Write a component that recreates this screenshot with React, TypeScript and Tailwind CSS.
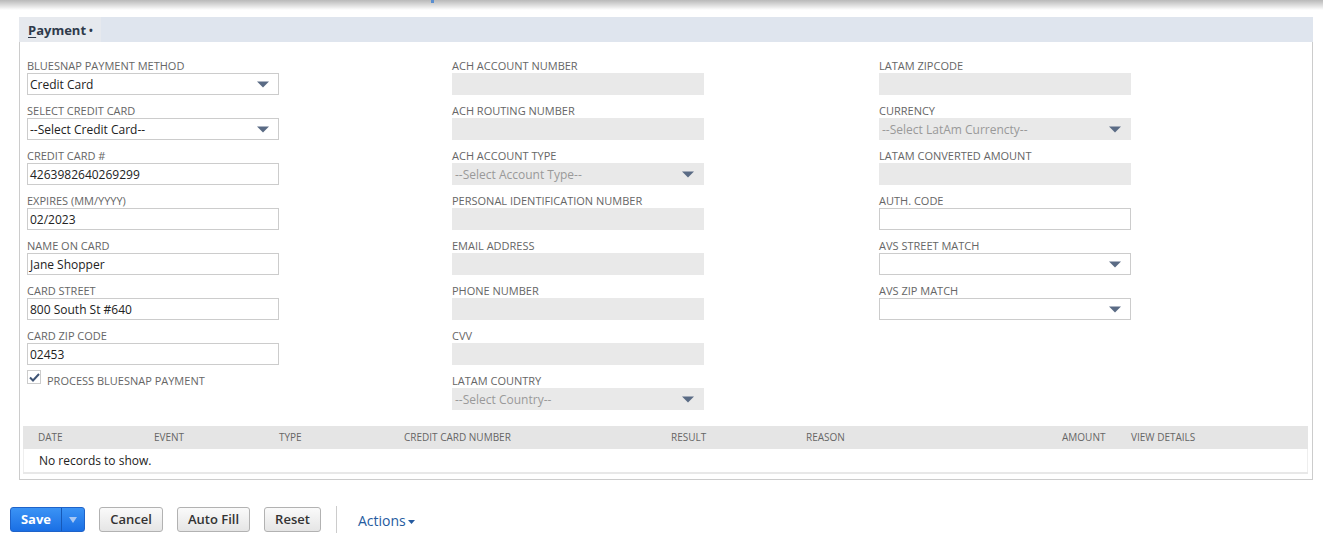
import React from 'react';

const font = { fontFamily: '"Open Sans", "Liberation Sans", sans-serif' };

const Caret = () => (
  <svg width="12" height="7" viewBox="0 0 12 7" className="shrink-0">
    <path d="M0 0.5 H12 L6 6.5 Z" fill="#5a6b85" />
  </svg>
);

type FieldProps = {
  label: string;
  value?: string;
  placeholder?: string;
  select?: boolean;
  disabled?: boolean;
};

const Field: React.FC<FieldProps> = ({ label, value, placeholder, select, disabled }) => (
  <div className="w-[252px]">
    <div className="text-[11px] leading-[15px] text-[#666] uppercase whitespace-nowrap">{label}</div>
    <div
      className={
        disabled
          ? 'h-[22px] bg-[#e9e9e9] flex items-center justify-between pl-[3px] pr-[10px]'
          : 'h-[22px] bg-white border border-[#cccccc] flex items-center justify-between pl-[2px] pr-[9px]'
      }
    >
      <span className={disabled ? 'text-[12px] text-[#999] pt-px' : 'text-[12px] text-[#222] pt-px'}>
        {value || placeholder || ''}
      </span>
      {select && <Caret />}
    </div>
  </div>
);

const columns = [
  { name: 'Date', w: 'w-[116px]' },
  { name: 'Event', w: 'w-[125px]' },
  { name: 'Type', w: 'w-[125px]' },
  { name: 'Credit Card Number', w: 'w-[267px]' },
  { name: 'Result', w: 'w-[135px]' },
  { name: 'Reason', w: 'w-[256px]' },
  { name: 'Amount', w: 'w-[69px]' },
  { name: 'View Details', w: 'flex-1' },
];

const GreyButton: React.FC<{ label: string; w: string }> = ({ label, w }) => (
  <button
    className={`${w} h-[25px] rounded-[3px] border border-[#b2b2b2] bg-gradient-to-b from-[#fafafa] to-[#e5e5e5] text-[13px] font-semibold text-[#333] flex items-center justify-center`}
  >
    {label}
  </button>
);

export default function App() {
  return (
    <div className="w-[1323px] h-[538px] bg-white overflow-hidden" style={font}>
      {/* top shadow strip */}
      <div className="h-[10px] bg-gradient-to-b from-[#b9b9b9] to-white">
        <div className="ml-[431px] w-[3px] h-[3px] bg-[#5b8fd0]" />
      </div>
      <div className="h-[7px]" />

      <div className="ml-[19px] mr-[10px]">
        {/* tab bar */}
        <div className="h-[25px] bg-[#dfe5ee] flex">
          <div className="w-[82px] h-full bg-[#e6e9ee] flex items-center pl-[9px] pt-[2px] text-[13px] font-bold text-[#2f3a4b]">
            <span>
              <span className="underline underline-offset-2">P</span>ayment
            </span>
            <span className="ml-[3px] text-[10px]">•</span>
          </div>
        </div>

        {/* panel */}
        <div className="border border-t-0 border-[#cccccc] pt-[16px] pb-[5px]">
          <div className="grid grid-cols-[425px_427px_1fr] pl-[7px]">
            <div className="flex flex-col gap-[8px]">
              <Field label="BlueSnap Payment Method" value="Credit Card" select />
              <Field label="Select Credit Card" value="--Select Credit Card--" select />
              <Field label="Credit Card #" value="4263982640269299" />
              <Field label="Expires (MM/YYYY)" value="02/2023" />
              <Field label="Name on Card" value="Jane Shopper" />
              <Field label="Card Street" value="800 South St #640" />
              <Field label="Card Zip Code" value="02453" />
              <div className="flex items-start -mt-[3px]">
                <div className="w-[14px] h-[14px] border border-[#cccccc] bg-white flex items-center justify-center">
                  <svg width="11" height="9" viewBox="0 0 11 9">
                    <path d="M1 4.5 L4 7.5 L10 1" stroke="#3f5475" strokeWidth="2" fill="none" />
                  </svg>
                </div>
                <span className="ml-[6px] mt-[3px] text-[11px] text-[#666] uppercase">Process BlueSnap Payment</span>
              </div>
            </div>
            <div className="flex flex-col gap-[8px]">
              <Field label="ACH Account Number" disabled />
              <Field label="ACH Routing Number" disabled />
              <Field label="ACH Account Type" placeholder="--Select Account Type--" select disabled />
              <Field label="Personal Identification Number" disabled />
              <Field label="Email Address" disabled />
              <Field label="Phone Number" disabled />
              <Field label="CVV" disabled />
              <Field label="LatAm Country" placeholder="--Select Country--" select disabled />
            </div>
            <div className="flex flex-col gap-[8px]">
              <Field label="LatAm Zipcode" disabled />
              <Field label="Currency" placeholder="--Select LatAm Currencty--" select disabled />
              <Field label="LatAm Converted Amount" disabled />
              <Field label="Auth. Code" />
              <Field label="AVS Street Match" select />
              <Field label="AVS Zip Match" select />
            </div>
          </div>

          {/* history table */}
          <div className="mt-[16px] ml-[3px] mr-[4px] border-b-2 border-[#e8e8e8]">
            <div className="h-[23px] bg-[#e5e5e5] flex items-center pl-[15px]">
              {columns.map((c) => (
                <div key={c.name} className={`${c.w} text-[10px] text-[#666] uppercase whitespace-nowrap`}>
                  {c.name}
                </div>
              ))}
            </div>
            <div className="h-[23px] flex items-center pl-[15px] text-[12px] text-[#222] border-x border-[#eeeeee]">
              No records to show.
            </div>
          </div>
        </div>
      </div>

      {/* button bar */}
      <div className="mt-[26px] ml-[10px] flex items-center">
        <div className="h-[25px] flex rounded-[3px] overflow-hidden border border-[#1f63c9] bg-gradient-to-b from-[#3b93f5] to-[#1a6fe4]">
          <div className="w-[50px] flex items-center justify-center text-[13px] font-bold text-white">Save</div>
          <div className="w-px bg-[#1659b8]" />
          <div className="w-[22px] flex items-center justify-center">
            <svg width="8" height="6" viewBox="0 0 8 6">
              <path d="M0 0 H8 L4 6 Z" fill="#a9c8f3" />
            </svg>
          </div>
        </div>
        <div className="ml-[14px]">
          <GreyButton label="Cancel" w="w-[64px]" />
        </div>
        <div className="ml-[14px]">
          <GreyButton label="Auto Fill" w="w-[73px]" />
        </div>
        <div className="ml-[14px]">
          <GreyButton label="Reset" w="w-[57px]" />
        </div>
        <div className="ml-[15px] w-px h-[27px] bg-[#cccccc]" />
        <div className="ml-[21px] flex items-center text-[14px] text-[#255ba0] pt-[2px]">
          Actions
          <svg width="7" height="4" viewBox="0 0 7 4" className="ml-[2px] mt-[2px]">
            <path d="M0 0 H7 L3.5 4 Z" fill="#255ba0" />
          </svg>
        </div>
      </div>
    </div>
  );
}
